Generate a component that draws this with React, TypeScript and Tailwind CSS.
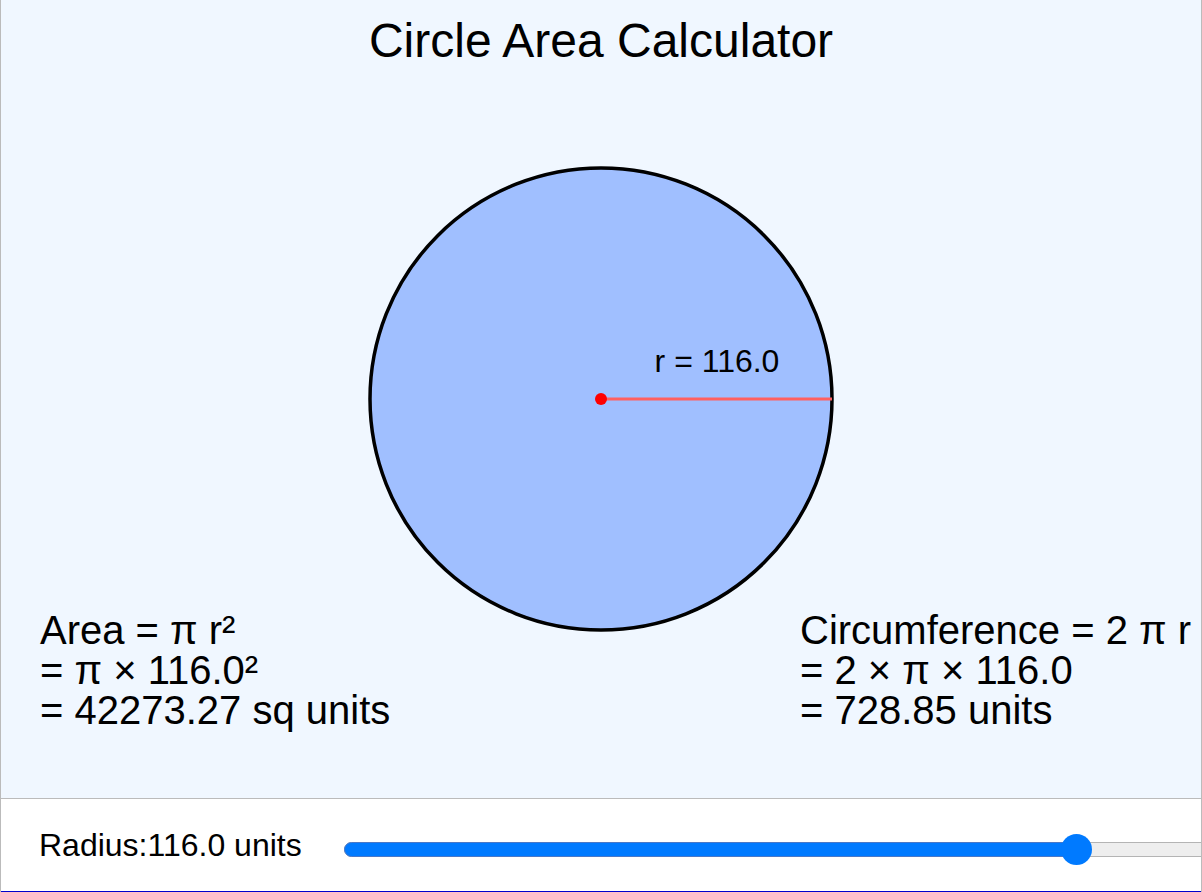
const font = { fontFamily: '"Liberation Sans", Arial, sans-serif' };

export default function App() {
  const radius = 116.0;
  const r = 231;
  const cx = 600;
  const cy = 319;
  const area = Math.PI * radius * radius;
  const circ = 2 * Math.PI * radius;
  const pct = 732;

  return (
    <div
      className="w-[1202px] h-[892px] flex flex-col border-x border-[#bbbbbb] bg-white text-black overflow-hidden"
      style={font}
    >
      {/* Canvas */}
      <div className="h-[798px] shrink-0 flex flex-col bg-[#f0f7ff]">
        <div className="h-[80px] shrink-0 pt-[17px] text-center">
          <h1 className="text-[48px] leading-none font-normal">Circle Area Calculator</h1>
        </div>
        <svg width="1200" height="718" viewBox="0 0 1200 718" className="block">
          <circle cx={cx} cy={cy} r={r} fill="#a0bfff" stroke="#000" strokeWidth="3.5" />
          <line x1={cx} y1={cy} x2={cx + r} y2={cy} stroke="#ff6060" strokeWidth="3" />
          <circle cx={cx} cy={cy} r="6" fill="#ff0000" />
          <text x={cx + 116} y={292} textAnchor="middle" fontSize="32" fill="#000">
            r = {radius.toFixed(1)}
          </text>
          <g fontSize="40" fill="#000">
            <text x="39" y="564">Area = π r²</text>
            <text x="39" y="604">= π × {radius.toFixed(1)}²</text>
            <text x="39" y="644">= {area.toFixed(2)} sq units</text>
            <text x="799" y="564">Circumference = 2 π r</text>
            <text x="799" y="604">= 2 × π × {radius.toFixed(1)}</text>
            <text x="799" y="644">= {circ.toFixed(2)} units</text>
          </g>
        </svg>
      </div>

      {/* Controls */}
      <div className="h-[94px] shrink-0 flex items-center border-t border-b border-t-[#bbbbbb] border-b-[#0000cc] bg-white overflow-hidden">
        <span className="pl-[38px] text-[32px] whitespace-nowrap">Radius:{radius.toFixed(1)} units</span>
        <div className="relative ml-auto w-[900px] shrink-0 -mr-[43px] mt-[8px] h-[31px] flex items-center">
          <div className="w-full h-[15px] rounded-full bg-[#eeeeee] border border-[#b4b4b4]" />
          <div
            className="absolute left-0 top-[8px] h-[15px] rounded-full bg-[#007aff] border border-[#4a78c8]"
            style={{ width: pct }}
          />
          <div
            className="absolute top-0 w-[31px] h-[31px] rounded-full bg-[#007aff]"
            style={{ left: pct - 15 }}
          />
        </div>
      </div>
    </div>
  );
}
